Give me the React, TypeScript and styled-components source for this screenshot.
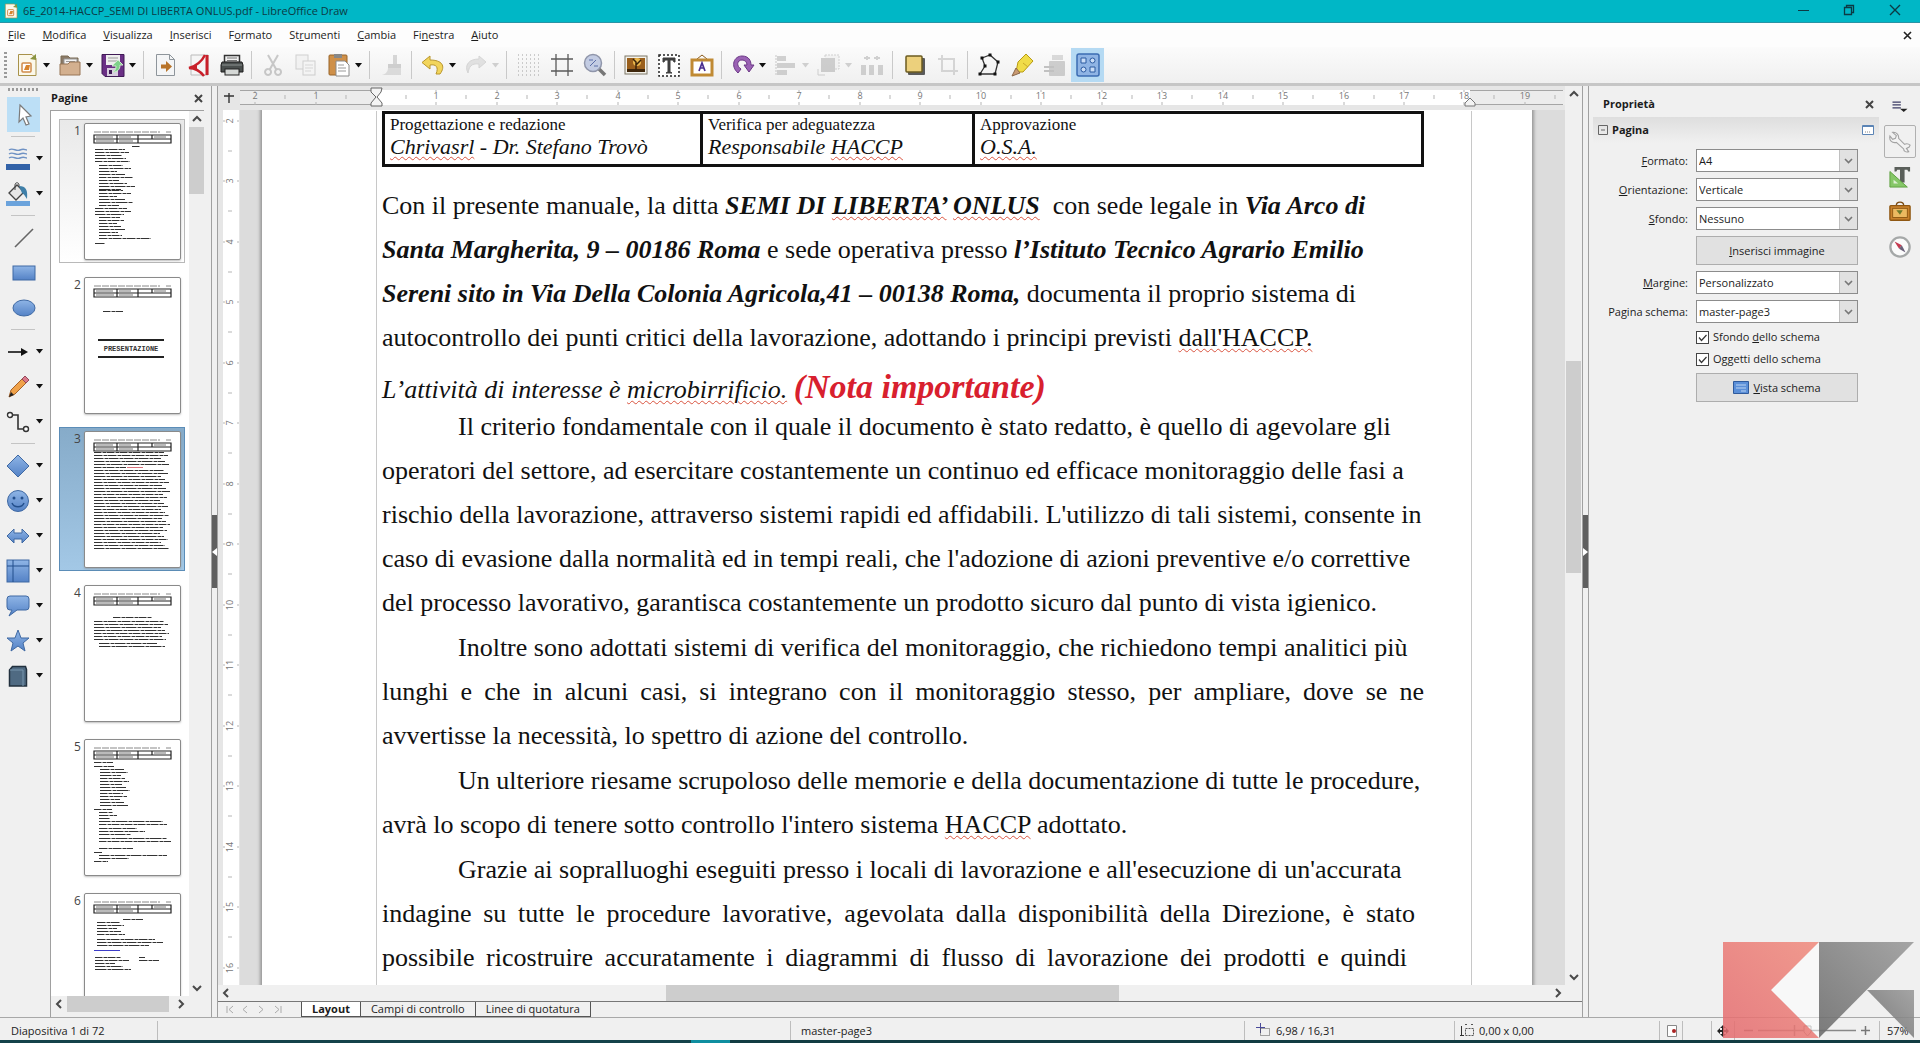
import React from "react";
import styled, { createGlobalStyle, css } from "styled-components";

const UI = '"Open Sans", "Noto Sans", sans-serif';
const SERIF = '"Liberation Serif", "Times New Roman", serif';

const Global = createGlobalStyle`
  *, *::before, *::after { box-sizing: border-box; }
  html, body { margin: 0; padding: 0; }
  body { font-family: ${UI}; font-size: 11px; line-height: 16px; color: #1c1c1c; background: #f0f0f0; }
  button, select, input { font: inherit; color: inherit; margin: 0; }
  button { padding: 0; border: 0; background: none; }
  svg { display: block; flex: none; }
`;

const Window = styled.div`
  display: flex;
  flex-direction: column;
  height: 100vh;
  overflow: hidden;
  position: relative;
`;

/* ---------- title, menu, toolbar ---------- */
const TitleBar = styled.header`
  display: flex;
  align-items: center;
  gap: 4px;
  height: 23px;
  flex: none;
  padding: 0 19px 0 3px;
  background: #00b7c6;
  border-bottom: 1px solid #2a93a5;
  color: #0c3a44;
`;
const TitleText = styled.h1`
  margin: 0;
  flex: 1;
  font-size: 11px;
  font-weight: 400;
  line-height: 16px;
`;
const WindowButtons = styled.div`
  display: flex;
  gap: 34px;
  padding-bottom: 3px;
`;
const MenuBar = styled.nav`
  display: flex;
  align-items: center;
  gap: 17px;
  height: 24px;
  flex: none;
  padding: 0 8px;
  background: #fdfdfd;
`;
const MenuItem = styled.button`
  line-height: 16px;
`;
const Push = styled.span`
  flex: 1;
`;
const Toolbar = styled.div`
  display: flex;
  align-items: center;
  height: 36px;
  flex: none;
  padding: 0 4px;
  background: linear-gradient(#fbfbfb, #f0f0f0);
`;
const ToolbarEdge = styled.div`
  height: 3px;
  flex: none;
  background: #c6c6c6;
`;
const Grip = styled.span<{ $across?: boolean }>`
  flex: none;
  ${(p) =>
    p.$across
      ? css`width: 32px; height: 3px; margin: 2px 8px 0; background: repeating-linear-gradient(90deg, #9a9a9a 0 2px, transparent 2px 4px);`
      : css`width: 3px; height: 26px; margin-right: 3px; background: repeating-linear-gradient(#9a9a9a 0 2px, transparent 2px 4px);`}
`;
const ToolButton = styled.button<{ $split?: boolean; $active?: boolean; $dim?: boolean }>`
  display: flex;
  align-items: center;
  width: ${(p) => (p.$split ? 43 : 33)}px;
  height: 34px;
  flex: none;
  gap: 4px;
  padding-left: 5px;
  background: ${(p) => (p.$active ? "#b5daf3" : "none")};
  & > svg { opacity: ${(p) => (p.$dim ? 0.5 : 1)}; }
`;
const ToolSeparator = styled.span<{ $wide?: boolean }>`
  width: 1px;
  height: 28px;
  flex: none;
  margin: 0 ${(p) => (p.$wide ? 5 : 4)}px 0 ${(p) => (p.$wide ? 4 : 3)}px;
  background: #c9c9c9;
`;

/* ---------- main layout ---------- */
const Main = styled.div`
  display: flex;
  flex: 1;
  min-height: 0;
  border-bottom: 1px solid #a8a8a8;
`;
const DrawBar = styled.div`
  display: flex;
  flex-direction: column;
  width: 50px;
  flex: none;
`;
const DrawButton = styled.button<{ $split?: boolean; $active?: boolean }>`
  display: flex;
  align-items: center;
  justify-content: center;
  gap: 6px;
  height: 35px;
  flex: none;
  margin-left: ${(p) => (p.$split ? 4 : 7)}px;
  width: ${(p) => (p.$split ? 40 : 33)}px;
  background: ${(p) => (p.$active ? "#bcdff6" : "none")};
`;
const DrawSeparator = styled.span`
  width: 24px;
  height: 1px;
  flex: none;
  margin: 4px 0 4px 11px;
  background: #c4c4c4;
`;
const DrawFirst = styled.div`
  padding-top: 6px;
`;

const PagesPanel = styled.section`
  display: flex;
  flex-direction: column;
  width: 161px;
  flex: none;
`;
const PanelTitle = styled.header`
  display: flex;
  align-items: center;
  justify-content: space-between;
  height: 24px;
  flex: none;
  padding: 0 8px 0 1px;
`;
const Heading = styled.h2`
  margin: 0;
  font-size: 11px;
  font-weight: 700;
  line-height: 16px;
`;
const PagesBody = styled.div`
  display: flex;
  flex: 1;
  min-height: 0;
  margin-right: 7px;
  border: solid #a0a0a0;
  border-width: 1px 0 0 1px;
`;
const PageList = styled.ol`
  display: flex;
  flex-direction: column;
  gap: 10px;
  flex: 1;
  margin: 0;
  padding: 8px 4px 0 8px;
  list-style: none;
  overflow: hidden;
  background: #fff;
`;
const PageItem = styled.li<{ $mode?: "hover" | "selected" }>`
  display: flex;
  justify-content: space-between;
  height: 144px;
  flex: none;
  padding: 3px 3px 3px 14px;
  border: 1px solid transparent;
  font-size: 12px;
  color: #444;
  ${(p) => p.$mode === "hover" && css`border-color: #b9b9b9; background: linear-gradient(#e9e9e9, #fff);`}
  ${(p) => p.$mode === "selected" && css`border-color: #5b8db8; background: linear-gradient(#86abc9, #a3c8e6);`}
`;
const Sheet = styled.span`
  width: 97px;
  height: 137px;
  background: #fff;
  border: 1px solid #8a8a8a;
  border-radius: 2px;
  box-shadow: 0 1px 2px #8888;
`;
const Scroll = styled.div<{ $vertical?: boolean }>`
  display: flex;
  flex-direction: ${(p) => (p.$vertical ? "column" : "row")};
  align-items: center;
  flex: none;
  background: #f0f0f0;
  ${(p) => (p.$vertical ? "width: 15px;" : "height: 16px;")}
`;
const ScrollTrack = styled.span<{ $grow: number; $thumb?: boolean }>`
  flex: ${(p) => p.$grow} 1 0;
  align-self: stretch;
  background: ${(p) => (p.$thumb ? "#cdcdcd" : "none")};
`;
const ScrollArrow = styled.button`
  display: flex;
  align-items: center;
  justify-content: center;
  width: 16px;
  height: 16px;
  flex: none;
`;
const PagesFoot = styled.div`
  flex: none;
  height: 21px;
  padding-right: 22px;
  border-left: 1px solid #a0a0a0;
`;
const Splitter = styled.div`
  display: flex;
  align-items: center;
  width: 7px;
  flex: none;
  border: solid #a0a0a0;
  border-width: 0 1px;
`;
const SplitHandle = styled.button`
  display: flex;
  align-items: center;
  justify-content: center;
  width: 5px;
  height: 73px;
  background: #5f5f5f;
`;

/* ---------- document ---------- */
const Center = styled.main`
  display: flex;
  flex-direction: column;
  flex: 1;
  min-width: 0;
  background: #e6e6e6;
`;
const Canvas = styled.div`
  display: grid;
  grid-template-columns: 22px 1fr 17px;
  grid-template-rows: 24px 1fr;
  flex: 1;
  min-height: 0;
`;
const Corner = styled.div`
  display: flex;
  align-items: center;
  justify-content: center;
`;
const RulerRow = styled.div`
  overflow: hidden;
`;
const RulerColumn = styled.div`
  grid-row: 2;
  grid-column: 1;
  overflow: hidden;
`;
const ScrollCell = styled.div`
  grid-row: 1 / 3;
  grid-column: 3;
  display: flex;
  justify-content: center;
  background: #f0f0f0;
`;
const Desk = styled.div`
  grid-row: 2;
  grid-column: 2;
  display: flex;
  overflow: hidden;
  padding: 0 33px 0 22px;
  background: #dcdcdc;
`;
const Paper = styled.article`
  flex: 1;
  min-width: 0;
  padding: 0 60px 0 114px;
  background: #fff;
  box-shadow: 0 0 3px 2px #999;
`;
const MarginBox = styled.div`
  height: 100%;
  padding: 0 47px 0 5px;
  border: solid #c8c8c8;
  border-width: 0 1px;
  font-family: ${SERIF};
  color: #111;
`;
const SignTable = styled.table`
  width: 100%;
  table-layout: fixed;
  border-collapse: collapse;
  margin: 1px 0 17px;
`;
const SignCell = styled.td<{ $w?: number }>`
  height: 53px;
  width: ${(p) => (p.$w ? `${p.$w}px` : "auto")};
  padding: 0 5px 5px;
  vertical-align: top;
  border: 3px solid #111;
  font-size: 17px;
  line-height: 22px;
`;
const SignName = styled.em`
  display: block;
  font-size: 22px;
  line-height: 22px;
`;
const Para = styled.p`
  margin: 0;
  font-size: 26px;
  line-height: 44px;
  white-space: nowrap;
  & + & { margin-top: 1px; }
`;
const Line = styled.span<{ $indent?: boolean; $justify?: number }>`
  display: block;
  padding-left: ${(p) => (p.$indent ? 76 : 0)}px;
  ${(p) =>
    p.$justify !== undefined &&
    css`
      white-space: normal;
      text-align-last: justify;
      padding-right: ${p.$justify}px;
    `}
`;
const Remark = styled.p`
  margin: 0;
  padding-top: 15px;
  font-size: 26px;
  line-height: 30px;
  font-style: italic;
  white-space: nowrap;
`;
const Note = styled.strong`
  font-size: 34px;
  line-height: 20px;
  color: #d8202e;
`;
const Strong = styled.strong`
  font-style: italic;
`;
const Typo = styled.span`
  text-decoration: underline wavy #d9533f 1px;
  text-underline-offset: 2px;
`;
const SheetTabs = styled.div`
  display: flex;
  height: 16px;
  flex: none;
  padding-left: 7px;
  border-top: 1px solid #777;
  background: #f0f0f0;
`;
const TabNav = styled.div`
  display: flex;
  align-items: center;
  gap: 7px;
  width: 76px;
`;
const SheetTab = styled.button<{ $active?: boolean }>`
  padding: 0 10px;
  font-size: 11px;
  line-height: 14px;
  border: solid #555;
  border-width: 0 1px 1px 0;
  font-weight: ${(p) => (p.$active ? 700 : 400)};
  background: ${(p) => (p.$active ? "#fff" : "#f0f0f0")};
  ${(p) => p.$active && css`border-left-width: 1px;`}
`;

/* ---------- sidebar ---------- */
const Sidebar = styled.aside`
  width: 291px;
  flex: none;
  padding: 5px 1px 0 4px;
`;
const SideHead = styled.header`
  display: flex;
  align-items: center;
  justify-content: space-between;
  height: 26px;
  padding: 0 5px 0 10px;
`;
const SectionHead = styled.header`
  display: flex;
  align-items: center;
  gap: 4px;
  height: 26px;
  padding: 0 5px 0 5px;
  background: linear-gradient(#dedede, #f0f0f0);
`;
const Form = styled.form`
  display: grid;
  grid-template-columns: 95px 162px;
  column-gap: 8px;
  row-gap: 6px;
  align-items: center;
  padding-top: 6px;
`;
const FieldLabel = styled.label`
  text-align: right;
  white-space: nowrap;
`;
const SelectBox = styled.span`
  display: grid;
  grid-template-columns: 1fr 18px;
  height: 23px;
  border: 1px solid #8c8c8c;
  background: #fff;
`;
const Select = styled.select`
  grid-area: 1 / 1 / 2 / 3;
  appearance: none;
  border: 0;
  padding: 0 20px 0 2px;
  background: transparent;
  outline: none;
  line-height: 16px;
`;
const SelectArrow = styled.span`
  grid-area: 1 / 2;
  display: flex;
  align-items: center;
  justify-content: center;
  background: #e1e1e1;
  border-left: 1px solid #c0c0c0;
  pointer-events: none;
`;
const FormButton = styled.button`
  grid-column: 2;
  display: flex;
  align-items: center;
  justify-content: center;
  gap: 4px;
  height: 29px;
  border: 1px solid #adadad;
  background: #e1e1e1;
`;
const Check = styled.label`
  grid-column: 2;
  display: flex;
  align-items: center;
  gap: 4px;
  height: 16px;
  white-space: nowrap;
`;
const CheckBox = styled.span`
  display: grid;
  width: 13px;
  height: 13px;
  & > * { grid-area: 1 / 1; }
`;
const CheckInput = styled.input`
  appearance: none;
  width: 13px;
  height: 13px;
  border: 1px solid #444;
  background: #fff;
  & + svg { visibility: hidden; pointer-events: none; }
  &:checked + svg { visibility: visible; }
`;
const DeckTabs = styled.nav`
  display: flex;
  flex-direction: column;
  align-items: center;
  gap: 2px;
  width: 40px;
  flex: none;
  padding-top: 4px;
`;
const DeckTab = styled.button<{ $active?: boolean }>`
  display: flex;
  align-items: center;
  justify-content: center;
  width: 32px;
  height: 33px;
  border: 1px solid ${(p) => (p.$active ? "#b0b0b0" : "transparent")};
  border-radius: 2px;
`;

/* ---------- status ---------- */
const StatusBar = styled.footer`
  display: flex;
  align-items: stretch;
  height: 22px;
  flex: none;
  padding: 3px 0 0;
`;
const StatusCell = styled.span<{ $w?: number; $last?: boolean; $pad?: number }>`
  display: flex;
  align-items: center;
  gap: 5px;
  padding-left: ${(p) => p.$pad ?? 11}px;
  ${(p) => (p.$w ? `width: ${p.$w}px; flex: none;` : "flex: 1;")}
  border-right: ${(p) => (p.$last ? 0 : 1)}px solid #bdbdbd;
  white-space: nowrap;
`;
const TaskEdge = styled.div`
  height: 3px;
  flex: none;
  background: linear-gradient(90deg, #14424a 0 36%, #0f8ea0 36% 38%, #123c42 38%);
`;
const Watermark = styled.svg`
  position: absolute;
  right: 6px;
  bottom: 5px;
  pointer-events: none;
`;

/* ---------- icons ---------- */
const Svg = ({ s = 24, w, h, children }: { s?: number; w?: number; h?: number; children: React.ReactNode }) => (
  <svg width={w ?? s} height={h ?? s} viewBox={`0 0 ${w ?? s} ${h ?? s}`} fill="none" aria-hidden="true">
    {children}
  </svg>
);
const Caret = ({ dim }: { dim?: boolean }) => (
  <Svg w={7} h={5}><path d="M0 0h7L3.5 4.5z" fill={dim ? "#aaa" : "#111"} /></Svg>
);
const Cross = ({ s = 9, c = "#444", t = 2 }: { s?: number; c?: string; t?: number }) => (
  <Svg s={s}><path d={`M1 1L${s - 1} ${s - 1}M${s - 1} 1L1 ${s - 1}`} stroke={c} strokeWidth={t} /></Svg>
);
const Chevron = ({ d }: { d: "up" | "down" | "left" | "right" }) => {
  const path = { up: "M1 7l4-4 4 4", down: "M1 3l4 4 4-4", left: "M7 1L3 5l4 4", right: "M3 1l4 4-4 4" }[d];
  return <Svg s={10}><path d={path} stroke="#4a4a4a" strokeWidth="2" /></Svg>;
};

const BF = "url(#blueFill)";
const BS = "#3f69a3";

const icons: Record<string, React.ReactNode> = {
  new: <><path d="M3.500 1.500H17l4 4v17H3.500z" fill="#fbf8ea" stroke="#a8924a" /><path d="M15 6l6-5v6z" fill="#8a9440" /><rect x="7" y="10" width="9" height="9" rx="1" fill="#fff" stroke="#d08a4a" strokeWidth="1.5" /><path d="M9 17l2-5 4 0-1 5z" fill="#d8842c" /></>,
  open: <><path d="M3 12V3h7l2 2h8v7" fill="#8a7a68" stroke="#7b6a52" /><path d="M6 6h13v7H6z" fill="#f4f4f4" stroke="#999" /><path d="M8 8.500h9" stroke="#999" /><path d="M2 11h8l2-2h10v13H2z" fill="#d3b08f" stroke="#977455" /></>,
  save: <><path d="M1 1.500h22v22H4l-3-3z" fill="#6a2f85" stroke="#3f1a55" /><rect x="5" y="2" width="14" height="10" fill="#eee" /><path d="M7 5h10M7 8h9" stroke="#999" /><rect x="6" y="15" width="11" height="8" fill="#d8ccdf" /><rect x="8" y="17" width="3" height="4" fill="#3f1a55" /><path d="M11 13l6-6 5 5h-3c0 5-3 7-7 7 2-1 3-3 3-6z" fill="#7fd08a" stroke="#cdeccb" /></>,
  export: <><path d="M2.500 1.500h13l5 5v16h-18z" fill="#f4f5f6" stroke="#8e959b" /><path d="M15.500 1.500v5h5" stroke="#8e959b" /><path d="M7 11.500h5V8l6 5.500-6 5.500v-3.500H7z" fill="#b8742a" /></>,
  pdf: <><path d="M4 2h17v20H4z" fill="#f5f5f5" stroke="#bbb" /><path d="M20 2v20" stroke="#c8202a" strokeWidth="3" /><path d="M18 2C15 8 9 13 2 15c6 0 11 3 15 8" stroke="#c8202a" strokeWidth="2.500" /><path d="M2 15c3-1 6-3 8-4v6c-2-1-5-2-8-2z" fill="#c8202a" /></>,
  print: <><path d="M4.500 2.500h15v7h-15z" fill="#f0f0f0" stroke="#333" strokeWidth="1.5" /><path d="M7 5h10M7 7.500h10" stroke="#777" /><path d="M2 9h20l1 3v7H1v-7z" fill="#4a4f4e" stroke="#1f1f1f" /><path d="M2 12h20" stroke="#8c9290" /><rect x="5" y="16" width="14" height="6" fill="#d5d8d6" stroke="#222" /></>,
  cut: <path d="M7 2l8 14M17 2L9 16M7 16a3 3 0 1 0 .1 0M17 16a3 3 0 1 0 .1 0" stroke="#9a9a9a" strokeWidth="2" />,
  copy: <><rect x="2" y="2" width="12" height="14" fill="#eee" stroke="#aaa" /><rect x="9" y="8" width="12" height="14" fill="#f4f4f4" stroke="#aaa" /><path d="M11 12h8M11 15h8M11 18h6" stroke="#bbb" /></>,
  paste: <><rect x="2" y="2" width="18" height="20" rx="1" fill="#cf9049" stroke="#98652a" /><rect x="7" y="1" width="8" height="4" fill="#888" /><path d="M9 8h9l4 4v11H9z" fill="#fff" stroke="#8a8a8a" /><path d="M11 12h6M11 15h8M11 18h8" stroke="#999" /></>,
  clone: <><path d="M13 2h4v9h-4z" fill="#b5b5b5" /><path d="M8 11h13v4H8z" fill="#a8a8a8" /><path d="M8 15h13v7H2c4-1 6-4 6-7z" fill="#c2c2c2" /></>,
  undo: <path d="M9 3L1 9.500 9 16v-4c6-1 9 2 6 9h4c6-8 2-14-10-14z" fill="#f2d55c" stroke="#b9962c" />,
  redo: <path d="M15 3l7 6-7 6v-4C7 10 5 14 4 20 0 12 5 6 15 6z" fill="#ccc" stroke="#b5b5b5" />,
  grid: <path d="M1 2h22M1 6h22M1 10h22M1 14h22M1 18h22M1 22h22" stroke="#a0a0a0" strokeDasharray="1 3" />,
  snap: <path d="M6 1v22M18 1v22M1 6h22M1 18h22" stroke="#5a5a5a" strokeWidth="1.3" />,
  zoom: <><path d="M15 15l7 7" stroke="#777" strokeWidth="3.5" /><circle cx="10" cy="10" r="8.500" fill="#c3cce3" stroke="#9096aa" strokeWidth="1.5" /><path d="M7 13l6-6M6 7h4M11 13h4" stroke="#5b6ea8" /></>,
  image: <><rect x="1" y="3" width="22" height="18" fill="#f3f1ea" stroke="#7d7766" /><rect x="3" y="5" width="18" height="14" fill="#9a5f1c" /><circle cx="13" cy="9" r="4" fill="#e9b74c" /><path d="M3 16h18v3H3z" fill="#3f270c" /><path d="M12 17V9l-3-3M12 12l5-5" stroke="#3a2208" strokeWidth="1.5" /></>,
  text: <><rect x="2" y="2" width="20" height="21" fill="#fff" stroke="#222" strokeWidth="1.5" strokeDasharray="2 2" /><path d="M6 5h12v4h-1l-1-2h-3v12l2 1H9l2-1V7H8L7 9H6z" fill="#3f3f3f" stroke="#3f3f3f" /></>,
  fontwork: <><path d="M7 6l5-4 5 4" stroke="#8a5a1a" /><rect x="2" y="7" width="20" height="15" fill="#fff" stroke="#c08a34" strokeWidth="3" /><path d="M9 18l3-8 3 8M10 15h4" stroke="#4a2f8f" strokeWidth="1.7" /></>,
  rotate: <path d="M7 20C-1 13 3 3 11 3c7 0 9 5 9 9h3l-5 7-5-7h3c0-3-2-5-5-5-5 0-6 6-1 9z" fill="#9a62b4" stroke="#6b3785" />,
  align: <><path d="M2 2v20" stroke="#999" strokeDasharray="2 1" /><path d="M3 3h9v5H3zM3 10h18v5H3zM3 17h10v5H3z" fill="#aaa" /></>,
  arrange: <><rect x="8" y="2" width="14" height="14" stroke="#aaa" strokeDasharray="2 1" fill="#eee" /><rect x="4" y="5" width="14" height="14" fill="#a5a5a5" /><path d="M1 16v6h7" stroke="#aaa" /></>,
  distribute: <><path d="M4 5h6M14 5h6M7 3v4M17 3v4" stroke="#aaa" strokeWidth="2" /><path d="M1 12h5v10H1zM9 12h5v10H9zM18 12h5v10h-5z" fill="#aaa" /></>,
  shadow: <><rect x="5" y="5" width="17" height="17" rx="1" fill="#5a5a5a" /><rect x="3" y="3" width="16" height="16" rx="1" fill="#ecd07c" stroke="#6b5b20" strokeWidth="1.5" /></>,
  crop: <path d="M6 2v16h16M2 6h16v16" stroke="#b5b5b5" strokeWidth="2" />,
  points: <><path d="M5 5l8-3 8 7-3 12H3l5-8z" stroke="#333" strokeWidth="1.3" /><path d="M3.500 3.500h3v3h-3zM11.500.5h3v3h-3zM19.500 7.500h3v3h-3zM16.500 19.500h3v3h-3zM1.500 19.500h3v3h-3zM6.500 11.500h3v3h-3z" fill="#111" /></>,
  glue: <><path d="M8 9l8-8 7 7-10 11-7 0z" fill="#f0dc48" stroke="#b89b14" /><path d="M6 15l4 5-8 3z" fill="#c99a72" stroke="#8a6648" /><path d="M13 10l5 4" stroke="#c9a92a" /></>,
  extrude: <><rect x="6" y="8" width="16" height="15" rx="1" fill="#a5a5a5" /><rect x="9" y="2" width="11" height="5" fill="#bbb" /><path d="M1 14h10M1 18h10" stroke="#8f8f8f" strokeWidth="2" /></>,
  draw: <><rect x="1" y="1" width="22" height="22" rx="2" fill="#8fb4e4" stroke="#3b6cb2" strokeWidth="1.5" /><path d="M5 5h5v5H5zM14 14h5v5h-5z" stroke="#2a5aa0" fill="#c8dcf6" /><circle cx="16.500" cy="7.500" r="2.500" stroke="#2a5aa0" fill="#c8dcf6" /><circle cx="7.500" cy="16.500" r="2.500" stroke="#2a5aa0" fill="#c8dcf6" /></>,

  select: <path d="M8 2l11 11-5 1 3 7-3 1-3-7-4 4z" fill="#fff" stroke="#7b7b7b" strokeWidth="1.2" />,
  lineColor: <><path d="M3 3c4-3 7 2 11 0s5 0 7 0M3 7c4-3 7 2 11 0s5 0 7 0M3 11c4-3 7 2 11 0s5 0 7 0" stroke="#6f92c4" strokeWidth="1.4" /><rect x="0" y="17" width="24" height="6" fill="#3262a8" /></>,
  fillColor: <><path d="M3 11l8-8 7 7-8 8z" fill="#e6e6e6" stroke="#444" strokeWidth="1.3" /><path d="M9 8V3c0-3 4-3 4 0v2" stroke="#444" /><path d="M13 4c7 0 9 4 8 13-2-3-3-5-5-6z" fill="#3f7fa8" /><rect x="0" y="19" width="24" height="5" fill="#6ba3dc" /></>,
  line: <path d="M3 21L21 3" stroke="#666" strokeWidth="1.6" />,
  rect: <rect x="1" y="5" width="22" height="14" fill={BF} stroke={BS} />,
  ellipse: <ellipse cx="12" cy="12" rx="11" ry="8" fill={BF} stroke={BS} />,
  arrow: <><path d="M2 12h15" stroke="#111" strokeWidth="1.6" /><path d="M15 8l7 4-7 4z" fill="#111" /></>,
  pencil: <><path d="M3 22l2-7L16 4l4 4L9 19z" fill="#f0a24a" stroke="#a5622a" /><path d="M16 4l3-3 4 4-3 3z" fill="#d9788a" stroke="#95485a" /><path d="M3 22l2-5 3 3z" fill="#222" /></>,
  connector: <><path d="M6 5h6v14h6" stroke="#333" strokeWidth="1.6" /><circle cx="4" cy="5" r="2.500" stroke="#333" fill="#fff" strokeWidth="1.4" /><circle cx="20" cy="19" r="2.500" stroke="#333" fill="#fff" strokeWidth="1.4" /></>,
  diamond: <path d="M12 1l11 11-11 11L1 12z" fill={BF} stroke={BS} />,
  smile: <><circle cx="12" cy="12" r="10.500" fill={BF} stroke={BS} /><circle cx="8" cy="9" r="1.500" fill="#234f8c" /><circle cx="16" cy="9" r="1.500" fill="#234f8c" /><path d="M6 14c2 5 10 5 12 0" stroke="#234f8c" strokeWidth="1.5" /></>,
  double: <path d="M1 12l7-7v4h8V5l7 7-7 7v-4H8v4z" fill={BF} stroke={BS} />,
  table: <><rect x="1" y="1" width="22" height="22" fill={BF} stroke={BS} /><path d="M7 1v22M1 7h22" stroke="#234f8c" /></>,
  callout: <path d="M4 2h16q3 0 3 3v8q0 3-3 3h-9l-8 6 3-6H4q-3 0-3-3V5q0-3 3-3z" fill={BF} stroke={BS} />,
  star: <path d="M12 1l3 8h8l-6 5 2 8-7-5-7 5 2-8-6-5h8z" fill={BF} stroke={BS} />,
  cube: <><path d="M3.500 6l3-3.500h13l1 3V22h-17z" fill="#4f6a82" stroke="#22303e" strokeWidth="1.5" /><path d="M4 6h13v16" stroke="#7896ae" /></>,

  menu: <><path d="M3 6h10M3 9.500h10M3 13h10" stroke="#3c3c66" strokeWidth="1.5" /><path d="M12 14h9l-4.500 4z" fill="#222" /></>,
  wrench: <path d="M4 1.500L8 5l-1 3-3 1-3-3.500C0 10 3 13.500 8 12.500l8 7c0 3 3 4 5.500 3L19 19l3-1.500 1-2c-2-2-4-2-6-1L10.500 8C11 4 8 1 4 1.500z" fill="#f2f2f2" stroke="#a2a2a2" strokeWidth="1.2" />,
  styles: <><path d="M6 1h17v5h-2l-1-2h-3v14h-5V4H9L8 6H6z" fill="#5a5f5a" /><path d="M1 6v17h19z" fill="#86c768" stroke="#5b9f3c" /><path d="M5 15v4h5z" fill="#dff0d6" /></>,
  gallery: <><path d="M8 5c0-5 8-5 8 0" stroke="#7a4a12" strokeWidth="1.5" /><rect x="1" y="5" width="22" height="16" rx="1" fill="#c9822c" stroke="#8f5712" strokeWidth="1.5" /><rect x="4" y="8" width="16" height="10" fill="#ecb960" stroke="#8f5712" /><path d="M8 10h7l-3 5z" fill="#6d7a2a" /></>,
  compass: <><circle cx="12" cy="12" r="10.500" fill="#fbfbfb" stroke="#a5a8a8" strokeWidth="2.500" /><path d="M6 6l8 4-3 4z" fill="#c43a50" /><path d="M18 18l-4-8-3 4z" fill="#6a6078" /></>,
};
const Icon = ({ n, s = 24 }: { n: string; s?: number }) => (
  <svg width={s} height={s} viewBox="0 0 24 24" fill="none" aria-hidden="true">{icons[n]}</svg>
);
const Paint = () => (
  <svg width="0" height="0" aria-hidden="true" style={{ position: "absolute" }}>
    <defs>
      <linearGradient id="blueFill" x1="0" y1="0" x2="0" y2="1">
        <stop offset="0" stopColor="#8fb5e6" />
        <stop offset="1" stopColor="#5482c6" />
      </linearGradient>
    </defs>
  </svg>
);

type Tool = { n: string; label: string; split?: boolean; dim?: boolean; active?: boolean; sep?: "thin" | "wide" };
const tools: Tool[] = [
  { n: "new", label: "Nuovo", split: true },
  { n: "open", label: "Apri", split: true },
  { n: "save", label: "Salva", split: true, sep: "wide" },
  { n: "export", label: "Esporta" },
  { n: "pdf", label: "Esporta nel formato PDF" },
  { n: "print", label: "Stampa", sep: "thin" },
  { n: "cut", label: "Taglia", dim: true },
  { n: "copy", label: "Copia", dim: true },
  { n: "paste", label: "Incolla", split: true, sep: "wide" },
  { n: "clone", label: "Clona formattazione", dim: true, sep: "thin" },
  { n: "undo", label: "Annulla", split: true },
  { n: "redo", label: "Ripristina", split: true, dim: true, sep: "wide" },
  { n: "grid", label: "Griglia" },
  { n: "snap", label: "Guide" },
  { n: "zoom", label: "Zoom", sep: "thin" },
  { n: "image", label: "Immagine" },
  { n: "text", label: "Casella di testo" },
  { n: "fontwork", label: "Fontwork", sep: "thin" },
  { n: "rotate", label: "Ruota", split: true },
  { n: "align", label: "Allinea", split: true, dim: true },
  { n: "arrange", label: "Disponi", split: true, dim: true },
  { n: "distribute", label: "Distribuisci", dim: true, sep: "wide" },
  { n: "shadow", label: "Ombra" },
  { n: "crop", label: "Ritaglia", dim: true, sep: "thin" },
  { n: "points", label: "Punti" },
  { n: "glue", label: "Punti di incollaggio" },
  { n: "extrude", label: "Estrusione", dim: true },
  { n: "draw", label: "Funzioni di disegno", active: true },
];

const drawTools = [
  ["lineColor", "fillColor"],
  ["line", "rect", "ellipse"],
  ["arrow", "pencil", "connector"],
  ["diamond", "smile", "double", "table", "callout", "star", "cube"],
];
const plain = new Set(["line", "rect", "ellipse"]);

/* A mnemonic marks its underlined letter with "_". */
const Mnemonic = ({ t }: { t: string }) => {
  const i = t.indexOf("_");
  if (i < 0) return <>{t}</>;
  return <span>{t.slice(0, i)}<u>{t[i + 1]}</u>{t.slice(i + 2)}</span>;
};

/* ---------- page thumbnails ---------- */
type Row = [number, number, number, string?];
const rows = (from: number, to: number, step: number, x: number, base: number, spread: number): Row[] => {
  const out: Row[] = [];
  for (let y = from, i = 1; y < to; y += step, i++) out.push([x, y, base + ((i * 37) % 11) * spread]);
  return out;
};
const thumbs: Row[][] = [
  [[47, 22, 8], ...rows(25, 40, 3, 10, 26, 1), ...rows(41, 66, 3, 14, 16, 2), ...rows(66, 84, 3, 14, 16, 2), ...rows(84, 92, 3, 10, 28, 1), ...rows(93, 112, 3, 14, 17, 1), [14, 114, 52], [10, 119, 10]],
  [[18, 33, 20]],
  [...rows(20, 34, 3, 9, 66, 1), [9, 35, 32], [42, 35, 16, "#d8707a"], ...rows(38, 118, 3, 9, 66, 1)],
  [[28, 31, 39], ...rows(35, 56, 3, 9, 66, 1), ...rows(57, 61, 3, 14, 50, 2)],
  [[9, 22, 19], [9, 26, 20], ...rows(29, 68, 3, 15, 20, 1), [9, 69, 18], ...rows(72, 80, 3, 14, 10, 1), ...rows(81, 86, 3, 14, 60, 1), ...rows(88, 96, 3, 14, 30, 2), ...rows(98, 104, 3, 14, 64, 1), [14, 108, 34], [9, 112, 8], [14, 115, 68], [14, 118, 30], [9, 121, 14]],
  [[38, 25, 20], ...rows(28, 43, 3, 12, 19, 1), ...rows(45, 53, 3, 12, 50, 2), [9, 56, 26, "#3c3cc8"], ...rows(63, 78, 3, 10, 18, 2), [54, 63, 6], [54, 66, 20]],
];
const Thumb = ({ i }: { i: number }) => (
  <svg width="95" height="135" viewBox="0 0 95 135" fill="none" aria-hidden="true">
    <path d="M9 8h66M81 8h5" stroke="#888" strokeDasharray="7 1" />
    <path d="M9 11h77v8H9zM9 15h77M32 11v8M53 11v8M67 11v4" stroke="#222" strokeWidth="1.2" />
    <path d="M11 13h17M34 13h12M69 13h12M11 17h18M34 17h14" stroke="#777" />
    {thumbs[i].map(([x, y, w, c], k) => (
      <g key={k}>
        <path d={`M${x} ${y}.5h${w}`} stroke={c ?? "#999"} />
        <path d={`M${x} ${y}.5h${w}`} stroke={c ?? "#333"} strokeDasharray={`${7 + (k % 5)} 2 3 1`} />
      </g>
    ))}
    {i === 1 && (
      <>
        <path d="M13 62h66M13 79h66" stroke="#222" strokeWidth="2" />
        <text x="46" y="73" textAnchor="middle" fontFamily="Liberation Mono, monospace" fontWeight="700" fontSize="7" fill="#333">PRESENTAZIONE</text>
      </>
    )}
  </svg>
);

/* ---------- rulers ---------- */
const ZERO = 136;
const at = (cm: number) => Math.round((cm * 1028) / 17);
const span = (a: number, b: number) => Array.from({ length: b - a + 1 }, (_, k) => a + k);
const HRuler = () => (
  <svg width="100%" height="24" fill="none" aria-hidden="true">
    <rect y="4" width="100%" height="15" fill="#ececec" />
    <rect x={ZERO} y="4" width="1094" height="15" fill="#fff" />
    <path d={`M0 4.500H${ZERO}M0 18.500H${ZERO}M1230 4.500h93M1230 18.500h93`} stroke="#a5a5a5" />
    {span(-2, 19).filter((n) => n !== 0).map((n) => (
      <text key={n} x={ZERO + at(n)} y="13" textAnchor="middle" fontFamily="Open Sans, sans-serif" fontSize="9" fill="#777">{Math.abs(n)}</text>
    ))}
    {span(-2, 19).map((n) => (
      <path key={n} d={`M${ZERO + at(n)} 16v3M${ZERO + at(n) + 30} 9v4M${ZERO + at(n)} 4v2`} stroke="#b5b5b5" />
    ))}
    <path d={`M${ZERO - 5} 2h11l-1 4-4 5 5 6v3h-11v-3l5-6-5-5z`} fill="#f4f4f4" stroke="#666" />
    <path d="M1225 20v-3l5-5 5 5v3z" fill="#f4f4f4" stroke="#777" />
  </svg>
);
const VRuler = () => (
  <svg width="22" height="875" fill="none" aria-hidden="true">
    <rect x="5" width="16" height="100%" fill="#fff" />
    {span(2, 16).map((n) => {
      const y = 11 + at(n - 2);
      return (
        <g key={n}>
          <text transform={`translate(15 ${y}) rotate(-90)`} textAnchor="middle" fontFamily="Open Sans, sans-serif" fontSize="9" fill="#777">{n}</text>
          <path d={`M5 ${y}h2M19 ${y}h2M10 ${y + 30}h4`} stroke="#b5b5b5" />
        </g>
      );
    })}
  </svg>
);

const Field = ({ id, label, value }: { id: string; label: string; value: string }) => (
  <>
    <FieldLabel htmlFor={id}><Mnemonic t={label} /></FieldLabel>
    <SelectBox>
      <Select id={id} defaultValue={value}><option>{value}</option></Select>
      <SelectArrow><Svg w={9} h={6}><path d="M1 1l3.500 3.500L8 1" stroke="#777" strokeWidth="1.6" /></Svg></SelectArrow>
    </SelectBox>
  </>
);
const Tick = ({ label }: { label: string }) => (
  <Check>
    <CheckBox>
      <CheckInput type="checkbox" defaultChecked />
      <Svg s={13}><path d="M3 6.500l2.500 3L10.500 4" stroke="#333" strokeWidth="1.2" /></Svg>
    </CheckBox>
    <Mnemonic t={label} />
  </Check>
);

export default function App() {
  return (
    <Window>
      <Global />
      <Paint />
      <TitleBar>
        <Icon n="new" s={16} />
        <TitleText>6E_2014-HACCP_SEMI DI LIBERTA ONLUS.pdf - LibreOffice Draw</TitleText>
        <WindowButtons>
          <button aria-label="Riduci"><Svg s={12}><path d="M1 6.500h11" stroke="#0c3a44" /></Svg></button>
          <button aria-label="Ripristina finestra"><Svg s={12}><path d="M1.500 3.500h7v7h-7zM3.500 3V1.500h7v7H9" stroke="#0c3a44" strokeWidth="1.3" /></Svg></button>
          <button aria-label="Chiudi finestra"><Cross s={12} c="#0c3a44" t={1.4} /></button>
        </WindowButtons>
      </TitleBar>
      <MenuBar>
        {["_File", "_Modifica", "_Visualizza", "_Inserisci", "F_ormato", "St_rumenti", "_Cambia", "Fi_nestra", "_Aiuto"].map((m) => (
          <MenuItem key={m}><Mnemonic t={m} /></MenuItem>
        ))}
        <Push />
        <button aria-label="Chiudi documento"><Cross s={9} c="#222" t={1.6} /></button>
      </MenuBar>
      <Toolbar>
        <Grip />
        {tools.map((t) => (
          <React.Fragment key={t.n}>
            <ToolButton aria-label={t.label} $split={t.split} $dim={t.dim} $active={t.active}>
              <Icon n={t.n} />
              {t.split && <Caret dim={t.dim} />}
            </ToolButton>
            {t.sep && <ToolSeparator $wide={t.sep === "wide"} />}
          </React.Fragment>
        ))}
      </Toolbar>
      <ToolbarEdge />

      <Main>
        <DrawBar>
          <Grip $across />
          <DrawFirst>
            <DrawButton $active aria-label="Seleziona"><Icon n="select" /></DrawButton>
          </DrawFirst>
          {drawTools.map((group, g) => (
            <React.Fragment key={g}>
              <DrawSeparator />
              {group.map((n) => {
                const split = !plain.has(n);
                return (
                  <DrawButton key={n} $split={split} aria-label={n}>
                    <Icon n={n} />
                    {split && <Caret />}
                  </DrawButton>
                );
              })}
            </React.Fragment>
          ))}
        </DrawBar>

        <PagesPanel>
          <PanelTitle>
            <Heading>Pagine</Heading>
            <button aria-label="Chiudi pannello pagine"><Cross /></button>
          </PanelTitle>
          <PagesBody>
            <PageList>
              {thumbs.map((_, i) => (
                <PageItem key={i} $mode={i === 0 ? "hover" : i === 2 ? "selected" : undefined}>
                  {i + 1}
                  <Sheet><Thumb i={i} /></Sheet>
                </PageItem>
              ))}
            </PageList>
            <Scroll $vertical>
              <ScrollArrow aria-label="Scorri su"><Chevron d="up" /></ScrollArrow>
              <ScrollTrack $grow={67} $thumb />
              <ScrollTrack $grow={787} />
              <ScrollArrow aria-label="Scorri giù"><Chevron d="down" /></ScrollArrow>
            </Scroll>
          </PagesBody>
          <PagesFoot>
            <Scroll>
              <ScrollArrow aria-label="Scorri a sinistra"><Chevron d="left" /></ScrollArrow>
              <ScrollTrack $grow={101} $thumb />
              <ScrollTrack $grow={4} />
              <ScrollArrow aria-label="Scorri a destra"><Chevron d="right" /></ScrollArrow>
            </Scroll>
          </PagesFoot>
        </PagesPanel>
        <Splitter><SplitHandle aria-label="Nascondi pagine"><Svg w={5} h={8}><path d="M5 0v8L0 4z" fill="#fff" /></Svg></SplitHandle></Splitter>

        <Center>
          <Canvas>
            <Corner><Svg s={12}><path d="M1 4h10M6 1v10" stroke="#333" strokeWidth="1.4" /></Svg></Corner>
            <RulerRow><HRuler /></RulerRow>
            <ScrollCell>
              <Scroll $vertical>
                <ScrollArrow aria-label="Documento su"><Chevron d="up" /></ScrollArrow>
                <ScrollTrack $grow={259} />
                <ScrollTrack $grow={211} $thumb />
                <ScrollTrack $grow={396} />
                <ScrollArrow aria-label="Documento giù"><Chevron d="down" /></ScrollArrow>
              </Scroll>
            </ScrollCell>
            <RulerColumn><VRuler /></RulerColumn>
            <Desk>
              <Paper>
                <MarginBox>
                  <SignTable>
                    <tbody>
                      <tr>
                        <SignCell $w={318}>Progettazione e redazione<SignName><Typo>Chrivasrl</Typo> - Dr. Stefano Trovò</SignName></SignCell>
                        <SignCell $w={272}>Verifica per adeguatezza<SignName>Responsabile <Typo>HACCP</Typo></SignName></SignCell>
                        <SignCell>Approvazione<SignName><Typo>O.S.A.</Typo></SignName></SignCell>
                      </tr>
                    </tbody>
                  </SignTable>
                  <Para>
                    <Line>Con il presente manuale, la ditta <Strong>SEMI DI <Typo>LIBERTA’</Typo> <Typo>ONLUS</Typo></Strong>&nbsp; con sede legale in <Strong>Via Arco di</Strong></Line>
                    <Line><Strong>Santa Margherita, 9 – 00186 Roma</Strong> e sede operativa presso <Strong>l’Istituto Tecnico Agrario Emilio</Strong></Line>
                    <Line><Strong>Sereni sito in Via Della Colonia Agricola,41 – 00138 Roma,</Strong> documenta il proprio sistema di</Line>
                    <Line>autocontrollo dei punti critici della lavorazione, adottando i principi previsti <Typo>dall'HACCP.</Typo></Line>
                  </Para>
                  <Remark>L’attività di interesse è <Typo>microbirrificio.</Typo> <Note>(Nota importante)</Note></Remark>
                  <Para>
                    <Line $indent>Il criterio fondamentale con il quale il documento è stato redatto, è quello di agevolare gli</Line>
                    <Line>operatori del settore, ad esercitare costantemente un continuo ed efficace monitoraggio delle fasi a</Line>
                    <Line>rischio della lavorazione, attraverso sistemi rapidi ed affidabili. L'utilizzo di tali sistemi, consente in</Line>
                    <Line>caso di evasione dalla normalità ed in tempi reali, che l'adozione di azioni preventive e/o correttive</Line>
                    <Line>del processo lavorativo, garantisca costantemente un prodotto sicuro dal punto di vista igienico.</Line>
                  </Para>
                  <Para>
                    <Line $indent>Inoltre sono adottati sistemi di verifica del monitoraggio, che richiedono tempi analitici più</Line>
                    <Line $justify={0}>lunghi e che in alcuni casi, si integrano con il monitoraggio stesso, per ampliare, dove se ne</Line>
                    <Line>avvertisse la necessità, lo spettro di azione del controllo.</Line>
                  </Para>
                  <Para>
                    <Line $indent>Un ulteriore riesame scrupoloso delle memorie e della documentazione di tutte le procedure,</Line>
                    <Line>avrà lo scopo di tenere sotto controllo l'intero sistema <Typo>HACCP</Typo> adottato.</Line>
                  </Para>
                  <Para>
                    <Line $indent>Grazie ai sopralluoghi eseguiti presso i locali di lavorazione e all'esecuzione di un'accurata</Line>
                    <Line $justify={9}>indagine su tutte le procedure lavorative, agevolata dalla disponibilità della Direzione, è stato</Line>
                    <Line $justify={17}>possibile ricostruire accuratamente i diagrammi di flusso di lavorazione dei prodotti e quindi</Line>
                  </Para>
                </MarginBox>
              </Paper>
            </Desk>
          </Canvas>
          <Scroll>
            <ScrollArrow aria-label="Documento a sinistra"><Chevron d="left" /></ScrollArrow>
            <ScrollTrack $grow={432} />
            <ScrollTrack $grow={453} $thumb />
            <ScrollTrack $grow={431} />
            <ScrollArrow aria-label="Documento a destra"><Chevron d="right" /></ScrollArrow>
            <ScrollArrow as="span" />
          </Scroll>
          <SheetTabs>
            <TabNav>
              {["M2 1v7M8 1L4 4.500 8 8", "M6 1L2 4.500 6 8", "M2 1l4 3.500L2 8", "M2 1l4 3.500L2 8M8 1v7"].map((d, i) => (
                <button key={i} aria-label={["Prima", "Precedente", "Successiva", "Ultima"][i]}><Svg s={9}><path d={d} stroke="#aaa" /></Svg></button>
              ))}
            </TabNav>
            <SheetTab $active>Layout</SheetTab>
            <SheetTab>Campi di controllo</SheetTab>
            <SheetTab>Linee di quotatura</SheetTab>
          </SheetTabs>
        </Center>

        <Splitter><SplitHandle aria-label="Nascondi barra laterale"><Svg w={5} h={8}><path d="M0 0v8l5-4z" fill="#fff" /></Svg></SplitHandle></Splitter>
        <Sidebar>
          <SideHead>
            <Heading>Proprietà</Heading>
            <button aria-label="Chiudi barra laterale"><Cross /></button>
          </SideHead>
          <SectionHead>
            <Svg s={10}><path d="M.5.5h9v9h-9zM3 5h4" stroke="#666" /></Svg>
            <Heading>Pagina</Heading>
            <Push />
            <Svg s={12}><path d="M.5 1.500h11v9H.5z" fill="#fff" stroke="#5b84b5" /><path d="M1 2.500h10" stroke="#5b84b5" /><path d="M3 8h6" stroke="#888" strokeDasharray="1 1" /></Svg>
          </SectionHead>
          <Form>
            <Field id="format" label="_Formato:" value="A4" />
            <Field id="orientation" label="_Orientazione:" value="Verticale" />
            <Field id="background" label="_Sfondo:" value="Nessuno" />
            <FormButton type="button"><Mnemonic t="_Inserisci immagine" /></FormButton>
            <Field id="margin" label="_Margine:" value="Personalizzato" />
            <Field id="master" label="Pagina schema:" value="master-page3" />
            <Tick label="Sfondo _dello schema" />
            <Tick label="O_ggetti dello schema" />
            <FormButton type="button">
              <Svg w={16} h={13}><path d="M.5.500h15v12H.5z" fill="#5b8fd8" stroke="#2f5a9c" /><path d="M3 4h10M3 7h10M8 10h5" stroke="#bcd4f2" /></Svg>
              <Mnemonic t="_Vista schema" />
            </FormButton>
          </Form>
        </Sidebar>
        <DeckTabs>
          <DeckTab aria-label="Impostazioni barra laterale"><Icon n="menu" s={20} /></DeckTab>
          <DeckTab $active aria-label="Proprietà"><Icon n="wrench" s={22} /></DeckTab>
          <DeckTab aria-label="Stili"><Icon n="styles" s={22} /></DeckTab>
          <DeckTab aria-label="Galleria"><Icon n="gallery" s={22} /></DeckTab>
          <DeckTab aria-label="Navigatore"><Icon n="compass" s={22} /></DeckTab>
        </DeckTabs>
      </Main>

      <StatusBar>
        <StatusCell $w={158}>Diapositiva 1 di 72</StatusCell>
        <StatusCell $w={633} />
        <StatusCell $pad={10}>master-page3</StatusCell>
        <StatusCell $w={210}>
          <Svg s={15}><path d="M4.500 0v10M0 4.500h9" stroke="#4a4a9a" /><path d="M4.500 5.500h9v7h-9z" stroke="#555" strokeDasharray="1 1" /></Svg>
          6,98 / 16,31
        </StatusCell>
        <StatusCell $w={205} $pad={4}>
          <Svg s={15}><path d="M2.500 3v9M1 12.500h4" stroke="#333" /><path d="M6.500 5.500h8v7h-8zM6 1.500h3M12 1.500h3" stroke="#555" strokeDasharray="2 1" /></Svg>
          0,00 x 0,00
        </StatusCell>
        <StatusCell $w={23} $pad={6}><Svg s={12}><path d="M1.500.5h9v11h-9z" fill="#fff" stroke="#888" /><circle cx="8" cy="6" r="2" fill="#a22" /></Svg></StatusCell>
        <StatusCell $w={29} />
        <StatusCell $w={23} $pad={5}><Svg s={12}><path d="M6 0l3 3H7v2h2V3l3 3-3 3V7H7v2h2l-3 3-3-3h2V7H3v2L0 6l3-3v2h2V3H3z" fill="#222" /></Svg></StatusCell>
        <StatusCell $w={145} $pad={9}>
          <Svg s={9}><path d="M0 4.500h9" stroke="#777" strokeWidth="1.5" /></Svg>
          <Svg w={98} h={13}><path d="M0 6.500h98M36.500 1v11" stroke="#888" strokeWidth="1.5" /><path d="M46 2h7v6l-3.500 4L46 8z" fill="#eee" stroke="#888" /></Svg>
          <Svg s={9}><path d="M0 4.500h9M4.500 0v9" stroke="#777" strokeWidth="1.5" /></Svg>
        </StatusCell>
        <StatusCell $w={40} $pad={7} $last>57%</StatusCell>
      </StatusBar>
      <TaskEdge />

      <Watermark width="191" height="96" viewBox="0 0 191 96" aria-hidden="true">
        <defs>
          <linearGradient id="wmRed" x1="0" y1="1" x2="1" y2="0"><stop offset="0" stopColor="#e46a6e" /><stop offset="1" stopColor="#f08a7c" /></linearGradient>
          <linearGradient id="wmGray" x1="0" y1="1" x2="1" y2="0"><stop offset="0" stopColor="#6a6a6a" /><stop offset="1" stopColor="#9a9a9a" /></linearGradient>
        </defs>
        <path d="M96 0v96L48 48z" fill="#fff" fillOpacity=".5" />
        <path d="M0 0h96L48 48l48 48H0z" fill="url(#wmRed)" fillOpacity=".85" />
        <path d="M96 0h95L96 96z" fill="url(#wmGray)" fillOpacity=".88" />
        <path d="M144 48h47v48z" fill="url(#wmGray)" fillOpacity=".88" />
      </Watermark>
    </Window>
  );
}
